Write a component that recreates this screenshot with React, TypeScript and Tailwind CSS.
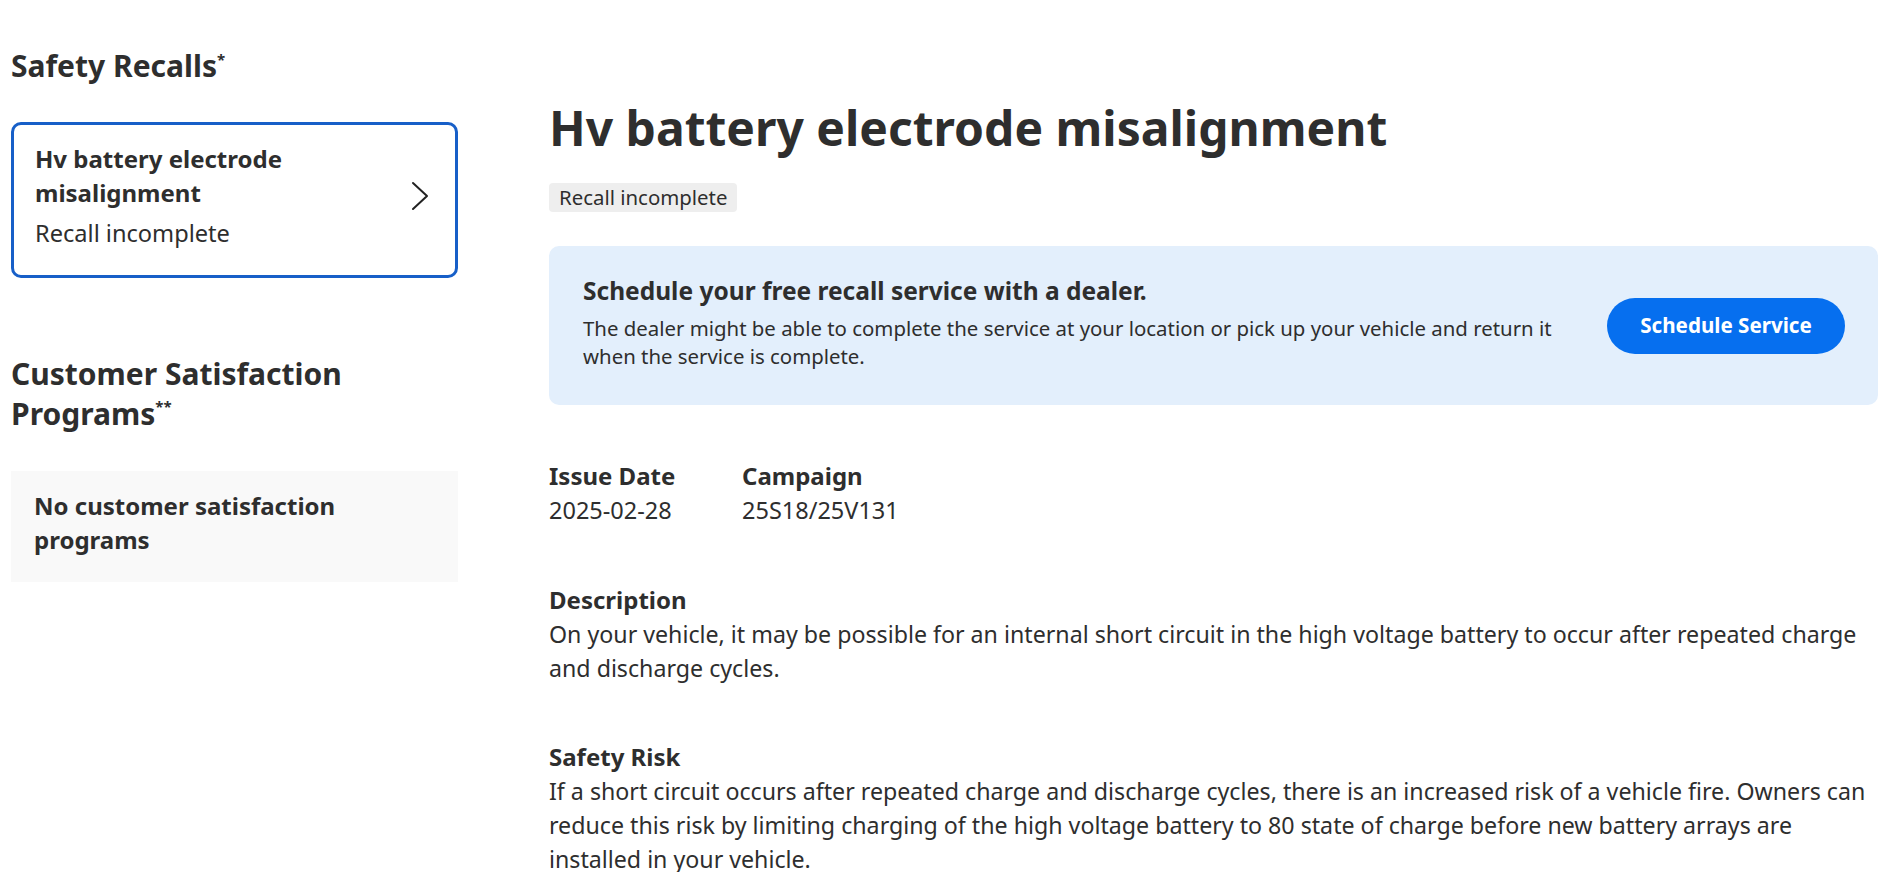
const font = { fontFamily: '"Noto Sans", "Open Sans", sans-serif' }

function Chevron() {
  return (
    <svg width="18" height="30" viewBox="0 0 18 30" fill="none" className="shrink-0">
      <polyline points="2,2 16,15 2,28" stroke="#222" strokeWidth="2" strokeLinecap="round" strokeLinejoin="round" />
    </svg>
  )
}

function Field({ label, value, className }: { label: string; value: string; className?: string }) {
  return (
    <div className={className}>
      <div className="text-[24px] font-bold leading-[34px]">{label}</div>
      <div className="text-[23.5px] leading-[34px]">{value}</div>
    </div>
  )
}

export default function App() {
  return (
    <div style={font} className="min-h-screen bg-white text-[#2e2e2e]">
      <div className="flex gap-[91px] pl-[11px] pt-[49px]">
        <aside className="w-[447px] shrink-0">
          <h2 className="text-[30px] font-bold leading-[34px]">
            Safety Recalls<span className="align-top text-[15px] leading-[20px]">*</span>
          </h2>

          <button className="mt-[39px] flex w-full items-center rounded-[10px] border-[3px] border-[#175fc8] pl-[21px] pr-[26px] pt-[17px] pb-[25px] text-left">
            <div className="flex-1 pr-[40px]">
              <div className="text-[24px] font-bold leading-[34px]">Hv battery electrode misalignment</div>
              <div className="mt-[6px] text-[23.6px] leading-[34px]">Recall incomplete</div>
            </div>
            <Chevron />
          </button>

          <h2 className="mt-[76px] text-[30px] font-bold leading-[40px]">
            Customer Satisfaction Programs<span className="align-top text-[15px] leading-[24px]">**</span>
          </h2>

          <div className="mt-[37px] bg-[#f9f9f9] pl-[23px] pr-[60px] pt-[18px] pb-[25px]">
            <div className="text-[24px] font-bold leading-[34px]">No customer satisfaction programs</div>
          </div>
        </aside>

        <main className="w-[1329px] shrink-0 pt-[51px]">
          <h1 className="text-[48px] font-bold leading-[56px]">Hv battery electrode misalignment</h1>

          <span className="mt-[27px] inline-block rounded-[4px] bg-[#eeeeee] px-[10px] text-[20.4px] leading-[29px]">
            Recall incomplete
          </span>

          <div className="mt-[34px] flex items-center gap-[40px] rounded-[10px] bg-[#e3effc] pl-[34px] pr-[33px] pt-[29px] pb-[35px]">
            <div className="flex-1">
              <div className="text-[24.5px] font-bold leading-[32px]">Schedule your free recall service with a dealer.</div>
              <p className="mt-[7px] text-[20.4px] leading-[28px]">
                The dealer might be able to complete the service at your location or pick up your vehicle and return it when the service is complete.
              </p>
            </div>
            <button className="mt-[6px] h-[56px] w-[238px] shrink-0 rounded-full bg-[#066fef] text-[20.6px] font-bold text-white">
              Schedule Service
            </button>
          </div>

          <div className="mt-[54px] flex">
            <Field className="w-[193px]" label="Issue Date" value="2025-02-28" />
            <Field label="Campaign" value="25S18/25V131" />
          </div>

          <section className="mt-[56px]">
            <h3 className="text-[24px] font-bold leading-[34px]">Description</h3>
            <p className="text-[23.2px] leading-[34px]">
              On your vehicle, it may be possible for an internal short circuit in the high voltage battery to occur after repeated charge and discharge cycles.
            </p>
          </section>

          <section className="mt-[55px]">
            <h3 className="text-[24px] font-bold leading-[34px]">Safety Risk</h3>
            <p className="text-[23.2px] leading-[34px]">
              If a short circuit occurs after repeated charge and discharge cycles, there is an increased risk of a vehicle fire. Owners can reduce this risk by limiting charging of the high voltage battery to 80 state of charge before new battery arrays are installed in your vehicle.
            </p>
          </section>
        </main>
      </div>
    </div>
  )
}
